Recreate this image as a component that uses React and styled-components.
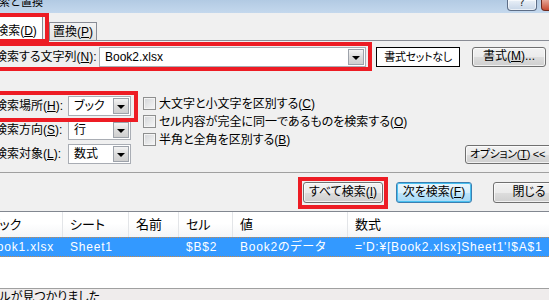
import React from "react";
import styled, { createGlobalStyle, css } from "styled-components";

const FONT = `"Liberation Sans", "Noto Sans CJK JP", sans-serif`;

const GlobalStyle = createGlobalStyle`
  html, body { margin: 0; padding: 0; background: #f0f0f0; overflow: hidden; }
  body { font-family: ${FONT}; font-size: 12px; color: #000; font-feature-settings: "palt"; }
  #root { width: 549px; height: 300px; overflow: hidden; }
  u { text-decoration: underline; text-underline-offset: 1px; }
`;

const Window = styled.div`
  position: relative;
  width: 549px;
  height: 300px;
  overflow: hidden;
  background: #f0f0f0;
  display: flex;
  flex-direction: column;
`;

const TitleBar = styled.div`
  flex: none;
  height: 13px;
  display: flex;
  align-items: flex-start;
  background: linear-gradient(#b2cae3, #c4d8ed);
`;

const Title = styled.div`
  margin-left: -12px;
  margin-top: -5px;
  font-size: 11px;
  line-height: 14px;
  white-space: nowrap;
  font-feature-settings: normal;
`;

const Spacer = styled.div`
  flex: 1;
`;

const HelpButton = styled.div`
  box-sizing: border-box;
  width: 30px;
  height: 11px;
  border: 1px solid #5d6d86;
  border-top: none;
  border-radius: 0 0 4px 4px;
  background: linear-gradient(#e9f0f8, #c6d5e7);
  font-family: "DejaVu Sans", sans-serif;
  font-size: 10px;
  line-height: 6px;
  text-align: center;
  color: #2a2a2a;
  box-shadow: inset 0 0 0 1px rgba(255, 255, 255, 0.6);
`;

const CloseButton = styled.div`
  box-sizing: border-box;
  width: 44px;
  height: 11px;
  margin-left: 4px;
  margin-right: -36px;
  border: 1px solid #6e2a1f;
  border-top: none;
  border-radius: 0 0 0 4px;
  background: linear-gradient(#e6a596, #c74a31);
`;

const TabStrip = styled.div`
  flex: none;
  height: 27px;
  display: flex;
  align-items: flex-end;
  margin-left: -10px;
`;

const Tab = styled.div`
  position: relative;
  box-sizing: border-box;
  border: 1px solid #898c95;
  border-bottom: none;
  text-align: center;
  font-size: 12px;
  line-height: 14px;
  white-space: nowrap;
  ${(p) =>
    p.$active
      ? css`
          width: 53px;
          height: 25px;
          margin-bottom: -1px;
          padding-top: 7px;
          background: #fff;
          z-index: 1;
        `
      : css`
          width: 48px;
          height: 18px;
          margin-left: 6px;
          padding-top: 2px;
          background: linear-gradient(#f3f3f3, #e3e3e3);
        `}
`;

const TabPanel = styled.div`
  flex: none;
  box-sizing: border-box;
  height: 133px;
  border-top: 1px solid #898c95;
  border-bottom: 1px solid #a0a0a0;
  padding-top: 6px;
  display: flex;
  flex-direction: column;
`;

const FindRow = styled.div`
  display: flex;
  align-items: center;
  height: 20px;
  margin-left: -5px;
`;

const Label = styled.div`
  flex: none;
  width: ${(p) => p.$w}px;
  white-space: nowrap;
  line-height: 20px;
`;

const Combo = styled.div`
  box-sizing: border-box;
  flex: none;
  width: ${(p) => p.$w}px;
  height: 20px;
  border: 1px solid #a9adb4;
  background: #fff;
  display: flex;
  align-items: center;
  padding-left: 5px;
  padding-right: 1px;
  white-space: nowrap;
`;

const ComboText = styled.span`
  flex: 1;
  line-height: 16px;
`;

const DropButton = styled.div`
  box-sizing: border-box;
  flex: none;
  width: 16px;
  height: 16px;
  border: 1px solid #9da2aa;
  background: linear-gradient(#f4f4f4, #dcdcdc 50%, #cfcfcf);
  display: flex;
  align-items: center;
  justify-content: center;
  &::after {
    content: "";
    border-left: 4px solid transparent;
    border-right: 4px solid transparent;
    border-top: 4px solid #000;
    margin-top: 1px;
  }
`;

const FormatNone = styled.div`
  box-sizing: border-box;
  flex: none;
  width: 84px;
  height: 20px;
  margin-left: 10px;
  border: 1px solid #000;
  background: #fff;
  text-align: center;
  font-size: 11px;
  letter-spacing: -0.3px;
  line-height: 18px;
  white-space: nowrap;
`;

const Button = styled.div`
  box-sizing: border-box;
  flex: none;
  width: ${(p) => p.$w}px;
  height: ${(p) => p.$h || 21}px;
  margin-left: ${(p) => p.$ml || 0}px;
  border: 1px solid ${(p) => (p.$focus ? "#3c7fb1" : "#707070")};
  border-radius: 3px;
  background: ${(p) =>
    p.$focus
      ? "linear-gradient(#eaf6fd, #d9f0fc 50%, #bee6fd 51%, #a7d9f5)"
      : "linear-gradient(#f2f2f2, #ebebeb 50%, #dddddd 51%, #cfcfcf)"};
  box-shadow: inset 0 0 0 1px ${(p) => (p.$focus ? "#48c0f0" : "rgba(255,255,255,0.7)")};
  text-align: ${(p) => p.$align || "center"};
  padding-left: ${(p) => p.$pl || 0}px;
  font-size: ${(p) => p.$fs || 12}px;
  letter-spacing: ${(p) => (p.$fs ? -0.3 : 0)}px;
  line-height: ${(p) => (p.$h || 21) - 3}px;
  white-space: nowrap;
`;

const OptionsArea = styled.div`
  display: flex;
  margin-top: 29px;
  margin-left: -5px;
  padding-bottom: 7px;
`;

const SelectGrid = styled.div`
  display: grid;
  grid-template-columns: 73px 63px;
  grid-auto-rows: 20px;
  row-gap: 4px;
  align-items: center;
`;

const CheckList = styled.div`
  display: flex;
  flex-direction: column;
  gap: 5px;
  margin-left: 12px;
  padding-top: 1px;
`;

const CheckRow = styled.div`
  display: flex;
  align-items: center;
  height: 13px;
  white-space: nowrap;
`;

const CheckBox = styled.div`
  box-sizing: border-box;
  flex: none;
  width: 13px;
  height: 13px;
  margin-right: 3px;
  border: 1px solid #8e8f8f;
  background: linear-gradient(135deg, #d3d5d8, #f7f7f7);
  box-shadow: inset 0 0 0 1px #f4f4f4;
`;

const CheckText = styled.span`
  line-height: 14px;
`;

const OptionSlot = styled.div`
  margin-left: auto;
  margin-right: -12px;
  align-self: flex-end;
`;

const ButtonRow = styled.div`
  flex: none;
  display: flex;
  justify-content: flex-end;
  margin-top: 9px;
  margin-right: -16px;
`;

const ListView = styled.div`
  flex: none;
  box-sizing: border-box;
  height: 77px;
  margin-top: 8px;
  border-top: 1px solid #828790;
  background: #fff;
`;

const Grid = styled.div`
  display: grid;
  grid-template-columns: 82px 66px 50px 54px 115px 1fr;
  margin-left: -19px;
  height: ${(p) => p.$h}px;
  ${(p) =>
    p.$header
      ? css`
          background: linear-gradient(#ffffff, #ffffff 45%, #f4f5f7);
        `
      : css`
          box-sizing: border-box;
          background: #3399ff;
          color: #fff;
          border-top: 1px dotted #c8894a;
          border-bottom: 1px dotted #c8894a;
        `}
`;

const Cell = styled.div`
  padding-left: 7px;
  white-space: nowrap;
  overflow: ${(p) => (p.$last ? "visible" : "hidden")};
  line-height: ${(p) => p.$lh}px;
  font-size: ${(p) => (p.$header ? 13 : 12)}px;
  letter-spacing: ${(p) => (p.$header ? 0 : 0.8)}px;
  border-right: ${(p) => (p.$header && !p.$last ? "1px solid #e3e5e8" : "none")};
`;

const StatusBar = styled.div`
  flex: 1;
  border-top: 1px solid #a0a0a0;
  background: #efecec;
  padding-top: 1px;
`;

const StatusText = styled.div`
  margin-left: -22px;
  white-space: nowrap;
  line-height: 14px;
`;

const Marker = styled.div`
  position: absolute;
  box-sizing: border-box;
  border: 4px solid #ed1c24;
  left: ${(p) => p.$x}px;
  top: ${(p) => p.$y}px;
  width: ${(p) => p.$w}px;
  height: ${(p) => p.$h}px;
  pointer-events: none;
  z-index: 5;
`;

const headers = ["ブック", "シート", "名前", "セル", "値", "数式"];
const row = ["Book1.xlsx", "Sheet1", "", "$B$2", "Book2のデータ", "='D:¥[Book2.xlsx]Sheet1'!$A$1"];

const selects = [
  { label: <>検索場所(<u>H</u>):</>, value: "ブック" },
  { label: <>検索方向(<u>S</u>):</>, value: "行" },
  { label: <>検索対象(<u>L</u>):</>, value: "数式" },
];

const checks = [
  <>大文字と小文字を区別する(<u>C</u>)</>,
  <>セル内容が完全に同一であるものを検索する(<u>O</u>)</>,
  <>半角と全角を区別する(<u>B</u>)</>,
];

export default function App() {
  return (
    <>
      <GlobalStyle />
      <Window>
        <TitleBar>
          <Title>検索と置換</Title>
          <Spacer />
          <HelpButton>?</HelpButton>
          <CloseButton />
        </TitleBar>

        <TabStrip>
          <Tab $active>検索(<u>D</u>)</Tab>
          <Tab>置換(<u>P</u>)</Tab>
        </TabStrip>

        <TabPanel>
          <FindRow>
            <Label $w={104}>検索する文字列(<u>N</u>):</Label>
            <Combo $w={267}>
              <ComboText>Book2.xlsx</ComboText>
              <DropButton />
            </Combo>
            <FormatNone>書式セットなし</FormatNone>
            <Button $w={74} $h={20} $ml={12}>書式(<u>M</u>)...</Button>
          </FindRow>

          <OptionsArea>
            <SelectGrid>
              {selects.map((s, i) => (
                <React.Fragment key={i}>
                  <Label $w={73}>{s.label}</Label>
                  <Combo $w={63}>
                    <ComboText>{s.value}</ComboText>
                    <DropButton />
                  </Combo>
                </React.Fragment>
              ))}
            </SelectGrid>
            <CheckList>
              {checks.map((c, i) => (
                <CheckRow key={i}>
                  <CheckBox />
                  <CheckText>{c}</CheckText>
                </CheckRow>
              ))}
            </CheckList>
            <OptionSlot>
              <Button $w={96} $h={19} $align="left" $pl={4} $fs={11}>
                オプション(<u>T</u>) &lt;&lt;
              </Button>
            </OptionSlot>
          </OptionsArea>
        </TabPanel>

        <ButtonRow>
          <Button $w={80}>すべて検索(<u>I</u>)</Button>
          <Button $w={76} $ml={13} $focus>次を検索(<u>F</u>)</Button>
          <Button $w={72} $ml={21}>閉じる</Button>
        </ButtonRow>

        <ListView>
          <Grid $header $h={25}>
            {headers.map((h, i) => (
              <Cell key={i} $header $lh={25} $last={i === headers.length - 1}>
                {h}
              </Cell>
            ))}
          </Grid>
          <Grid $h={20}>
            {row.map((v, i) => (
              <Cell key={i} $lh={18} $last={i === row.length - 1}>
                {v}
              </Cell>
            ))}
          </Grid>
        </ListView>

        <StatusBar>
          <StatusText>1 セルが見つかりました</StatusText>
        </StatusBar>

        <Marker $x={-4} $y={13} $w={53} $h={30} />
        <Marker $x={-4} $y={42} $w={376} $h={29} />
        <Marker $x={-4} $y={91} $w={142} $h={31} />
        <Marker $x={298} $y={177} $w={90} $h={32} />
      </Window>
    </>
  );
}
